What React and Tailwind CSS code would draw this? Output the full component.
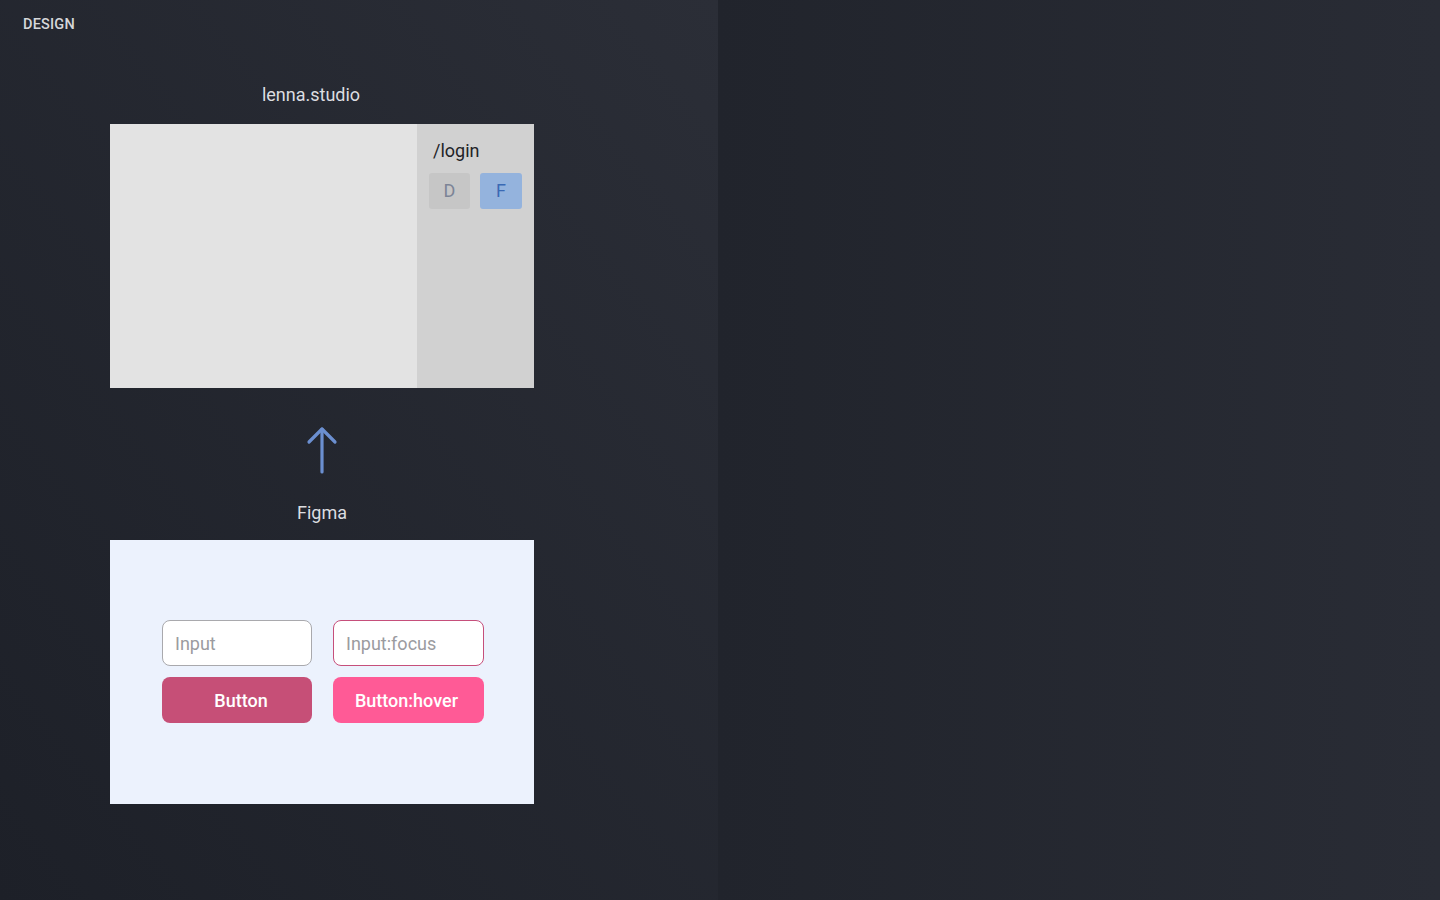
export default function App() {
    return (
        <div className="flex h-[900px] w-[1440px] font-['Roboto',sans-serif]">
            <div className="relative w-[718px] h-full bg-gradient-to-tr from-[#1d2028] to-[#2b2e37]">
                <div className="pl-[23px] pt-[14px] text-[14.5px] font-medium text-[#d6d7da] tracking-[0.2px]">DESIGN</div>
                <div className="pl-[110px] pt-[47px]">
                    <div className="w-[424px] pr-[22px] text-center text-[18px] text-[#dcdde0] leading-[24px]">lenna.studio</div>
                    <div className="mt-[17px] flex h-[264px] w-[424px]">
                        <div className="w-[307px] bg-[#e3e3e3]"></div>
                        <div className="flex-1 bg-[#d1d1d1] px-[12px] pt-[15px]">
                            <div className="pl-[4px] text-[18px] leading-[24px] text-[#222327]">/login</div>
                            <div className="mt-[10px] flex gap-[10px]">
                                <div className="flex h-[36px] w-[41px] items-center justify-center rounded-[3px] bg-[#c6c6c6] text-[18px] text-[#7c8496]">D</div>
                                <div className="flex h-[36px] w-[42px] items-center justify-center rounded-[3px] bg-[#94b3dd] text-[18px] text-[#3a69b4]">F</div>
                            </div>
                        </div>
                    </div>
                    <div className="flex w-[424px] justify-center pt-[38px]">
                        <svg width="32" height="48" viewBox="0 0 32 48" fill="none" stroke="#6b8fd0" strokeWidth="3.2" strokeLinecap="round" strokeLinejoin="round">
                            <path d="M16 46V3" />
                            <path d="M3 16L16 3L29 16" />
                        </svg>
                    </div>
                    <div className="mt-[27px] w-[424px] text-center text-[18px] leading-[24px] text-[#dcdde0]">Figma</div>
                    <div className="mt-[15px] flex h-[264px] w-[424px] flex-col items-center justify-center bg-[#ecf2fd] pl-[2px]">
                        <div className="grid grid-cols-[150px_151px] gap-x-[21px] gap-y-[11px]">
                            <div className="flex h-[46px] items-center rounded-[8px] border border-[#a9a9ad] bg-white px-[12px] text-[18px] text-[#9b9b9f]">Input</div>
                            <div className="flex h-[46px] items-center rounded-[8px] border border-[#c64f7b] bg-white px-[12px] text-[18px] text-[#9b9b9f]">Input:focus</div>
                            <div className="flex h-[46px] items-center justify-center rounded-[8px] bg-[#c64f77] pl-[8px] text-[18px] font-medium text-white">Button</div>
                            <div className="flex h-[46px] items-center justify-center rounded-[8px] bg-[#ff5a96] pr-[4px] text-[18px] font-medium text-white">Button:hover</div>
                        </div>
                    </div>
                </div>
            </div>
            <div className="flex-1 h-full bg-gradient-to-r from-[#21242c] to-[#292c35]"></div>
        </div>
    );
}
